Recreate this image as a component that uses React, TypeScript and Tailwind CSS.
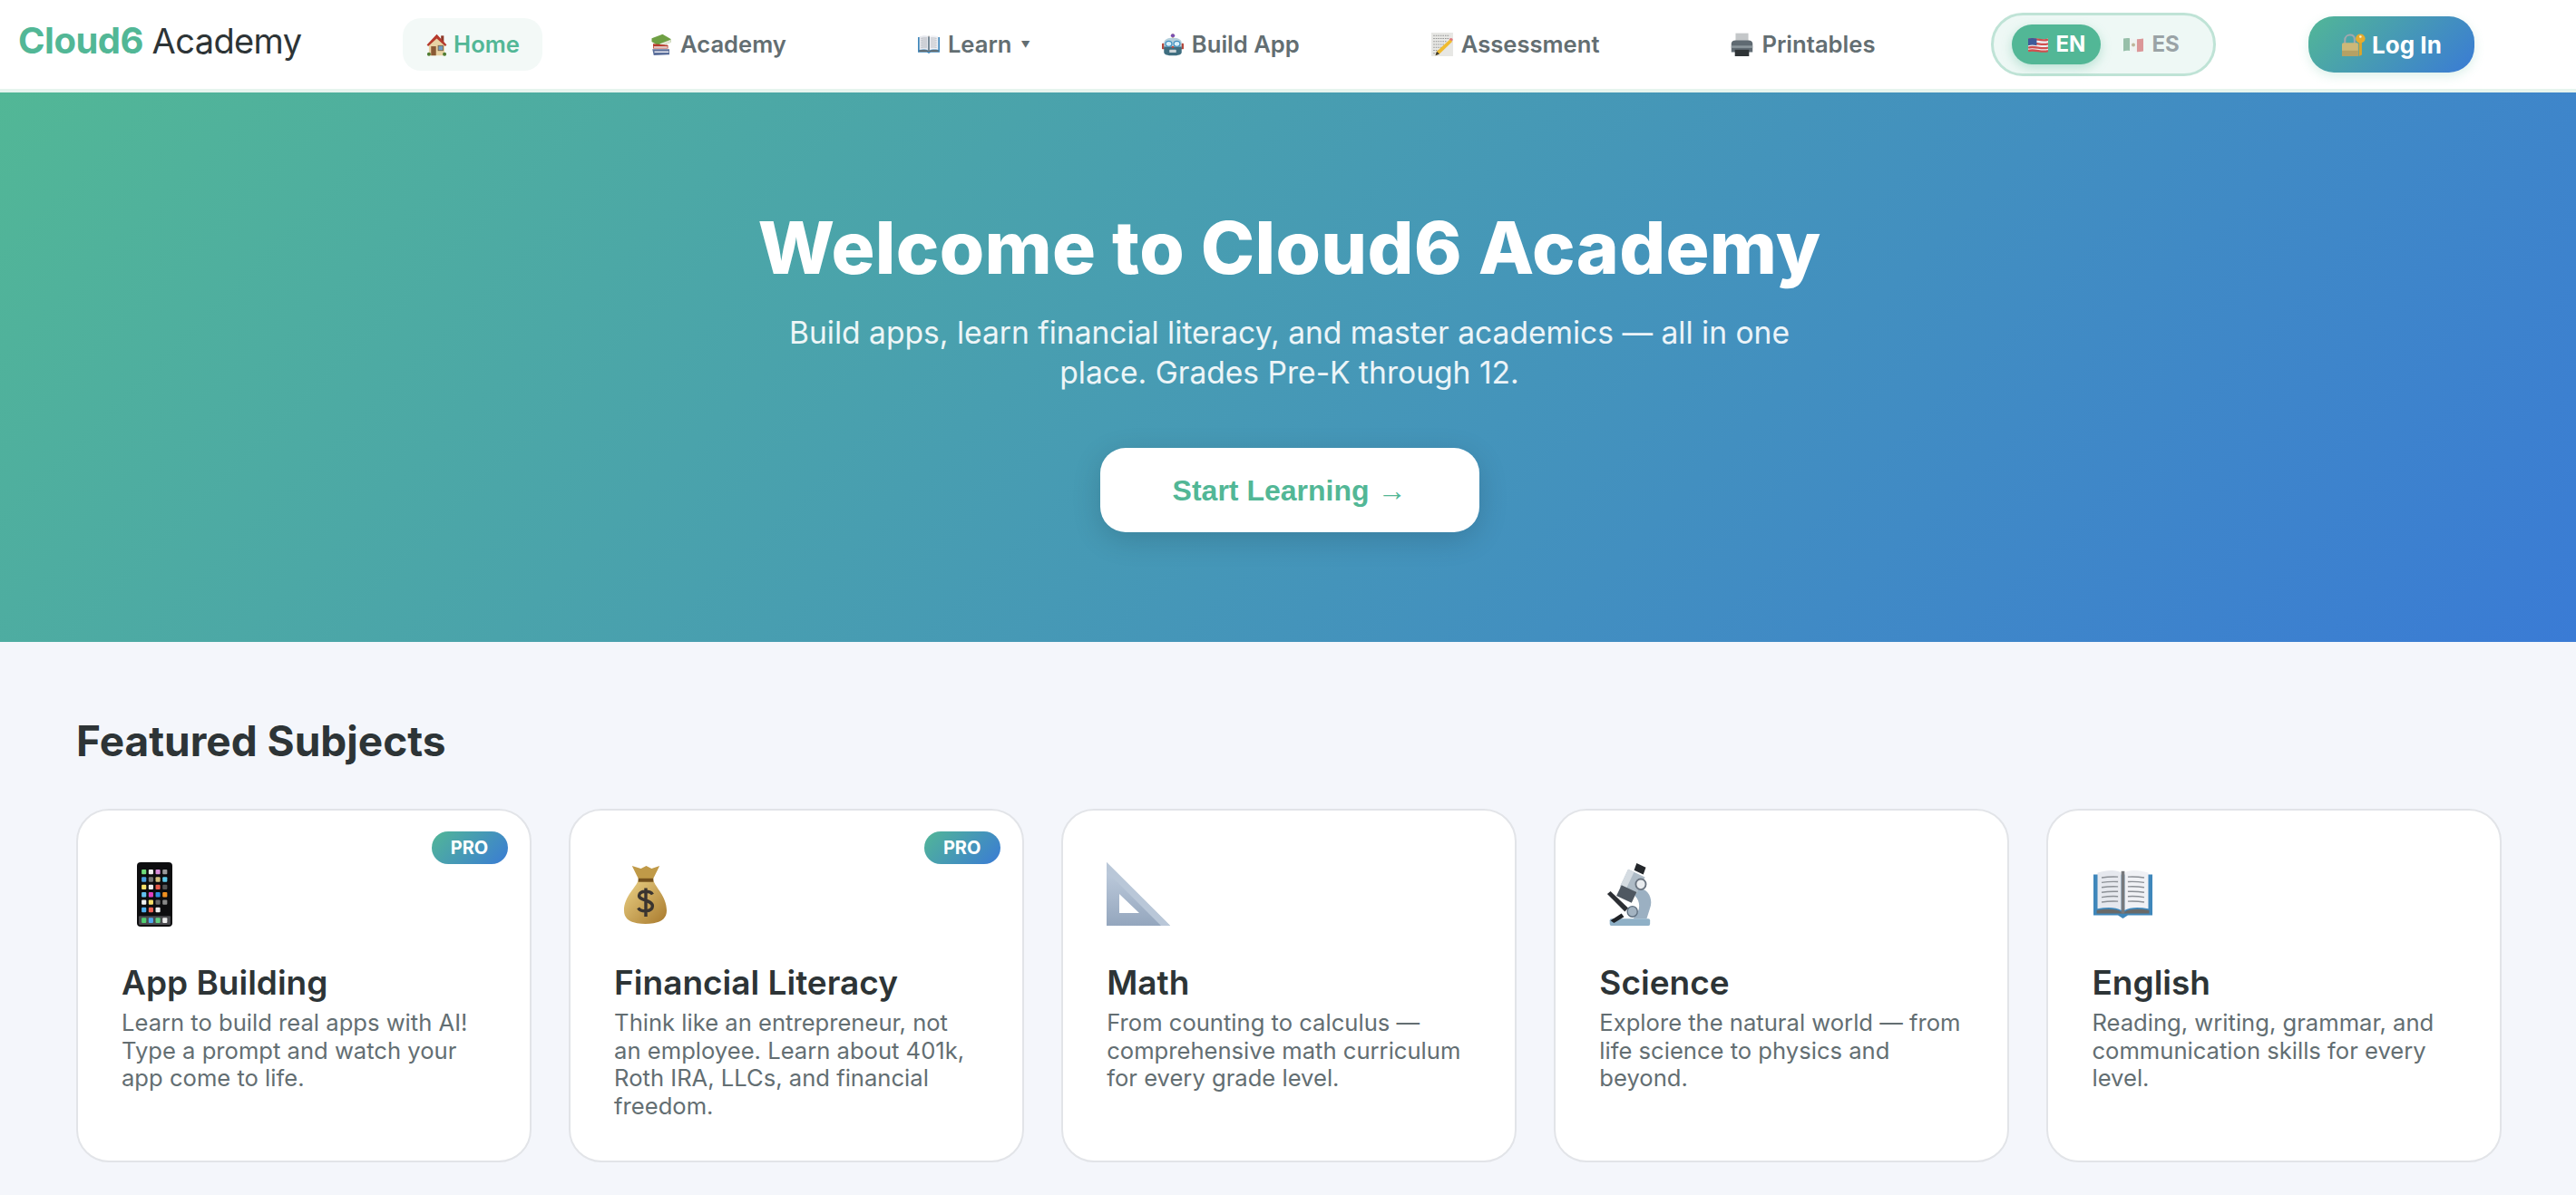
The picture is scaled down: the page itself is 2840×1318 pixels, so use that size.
import React from "react";

const House = () => (
  <svg viewBox="0 0 32 32" className="w-[25px] h-[25px] shrink-0" preserveAspectRatio="none">
    <rect x="22" y="3" width="4" height="9" fill="#8f3a2a" />
    <path d="M5 15 16 5l11 10v16H5z" fill="#e8d3a4" />
    <path d="M2 16 16 1l14 15-2 2L16 7 4 18z" fill="#b5392b" />
    <rect x="8" y="18" width="7" height="13" fill="#8a5a34" />
    <rect x="18" y="17" width="7" height="7" fill="#6d9cc0" stroke="#7b5a3a" />
    <circle cx="5" cy="29" r="2.6" fill="#4f7d33" /><circle cx="27" cy="29" r="2.6" fill="#4f7d33" />
  </svg>
);
const Books = () => (
  <svg viewBox="0 0 32 32" className="w-[24px] h-[24px] shrink-0" preserveAspectRatio="none">
    <path d="M2 7 18 1l12 7v5L14 19 2 12z" fill="#6fa044" />
    <path d="M14 15 30 9v4L14 19z" fill="#e6e6d8" />
    <path d="M4 15 26 17v5L4 22z" fill="#b83a2c" />
    <rect x="5" y="19" width="20" height="2" fill="#eee" />
    <path d="M3 23 28 23v8L5 32z" fill="#5a6e9a" />
    <rect x="6" y="26" width="21" height="2" fill="#e8e8f0" />
  </svg>
);
const OpenBook = ({ className }: { className: string }) => (
  <svg viewBox="0 0 36 30" className={className} preserveAspectRatio="none">
    <path d="M0 3h36v25H21l-3 2-3-2H0z" fill="#3f87bb" />
    <path d="M2 25c6-1 12-1 15 1h2c3-2 9-2 15-1v2H2z" fill="#6a6a68" />
    <path d="M2.500 2c6-2 12-2 14.500 0v23c-3-2-9-2-14.500-1z" fill="#e6e8ee" />
    <path d="M33.500 2c-6-2-12-2-14.500 0v23c3-2 9-2 14.500-1z" fill="#f0f1f5" />
    <rect x="17" y="1" width="2" height="26" fill="#77797c" />
    <g stroke="#8c9096" strokeWidth=".8" fill="none">
      <path d="M5 5c3-.5 6-.7 10-.5M5 8c3-.5 6-.7 10-.5M5 11c3-.5 6-.7 10-.5M5 14c3-.5 6-.7 10-.5M5 17c3-.5 6-.7 10-.5M5 20c3-.5 6-.7 10-.5" />
      <path d="M31 5c-3-.5-6-.7-10-.5M31 8c-3-.5-6-.7-10-.5M31 11c-3-.5-6-.7-10-.5M31 14c-3-.5-6-.7-10-.5M31 17c-3-.5-6-.7-10-.5M31 20c-3-.5-6-.7-10-.5" />
    </g>
  </svg>
);
const Robot = () => (
  <svg viewBox="0 0 32 40" className="w-[24px] h-[26px] shrink-0" preserveAspectRatio="none">
    <rect x="15" y="2" width="2" height="9" fill="#c9a24a" />
    <circle cx="16" cy="5" r="3" fill="#7b4fb0" />
    <rect x="0" y="18" width="4" height="10" rx="1" fill="#b5483c" /><rect x="28" y="18" width="4" height="10" rx="1" fill="#b5483c" />
    <path d="M3 18c0-6 5-9 13-9s13 3 13 9v8H3z" fill="#b4d0dc" />
    <path d="M3 24h26v9c0 4-5 6-13 6S3 37 3 33z" fill="#3f6e80" />
    <circle cx="10" cy="19" r="4.600" fill="#d8f0fa" stroke="#3f8fc0" strokeWidth="1.600" />
    <circle cx="22" cy="19" r="4.600" fill="#d8f0fa" stroke="#3f8fc0" strokeWidth="1.600" />
    <rect x="14.500" y="23" width="3" height="3" fill="#c2473b" />
    <rect x="11" y="29" width="10" height="5" rx="1" fill="#ccd4d8" />
  </svg>
);
const Memo = () => (
  <svg viewBox="0 0 32 40" className="w-[24px] h-[26px] shrink-0" preserveAspectRatio="none">
    <rect x="0" y="0" width="32" height="40" fill="#e7e7e4" />
    <g stroke="#8a8a8a" strokeWidth="1.300" strokeDasharray="2 1.400">
      <path d="M3 5h24M3 10h24M3 15h20M3 20h16M3 25h12M3 30h10M3 35h6" />
    </g>
    <circle cx="29" cy="12" r="2.600" fill="#e07a80" />
    <path d="M27 12l4 3L12 36l-6 3 2-7z" fill="#f0bb2f" />
    <path d="M6 39l2-7 4 4z" fill="#3a3a3a" />
  </svg>
);
const Printer = () => (
  <svg viewBox="0 0 32 40" className="w-[25px] h-[26px] shrink-0" preserveAspectRatio="none">
    <rect x="7" y="1" width="18" height="16" fill="#c4c7c9" />
    <path d="M1 19c0-4 2-6 6-6h18c4 0 6 2 6 6v14H1z" fill="#5f6a72" />
    <rect x="1" y="22" width="30" height="4" fill="#8b969c" />
    <rect x="6" y="29" width="20" height="11" fill="#2f3437" />
  </svg>
);
const USFlag = () => (
  <svg viewBox="0 0 28 22" className="w-[22px] h-[17px] shrink-0" preserveAspectRatio="none">
    <path d="M0 2c9-3 19 3 28 0v18c-9 3-19-3-28 0z" fill="#eef0f4" />
    <g fill="none" stroke="#d0504f" strokeWidth="3">
      <path d="M0 3.500c9-3 19 3 28 0M0 9.500c9-3 19 3 28 0M0 15c9-3 19 3 28 0" />
      <path d="M0 19.500c9-3 19 3 28 0" />
    </g>
    <path d="M0 2c4-1.300 8-1 12 0v10c-4-1-8-1.300-12 0z" fill="#3f5a9a" />
  </svg>
);
const MXFlag = () => (
  <svg viewBox="0 0 28 22" className="w-[22px] h-[17px] shrink-0 opacity-60" preserveAspectRatio="none">
    <path d="M0 2c3-1 6-1 9-.500v18c-3-.500-6-.500-9 .500z" fill="#5e9a78" />
    <path d="M9 1.500c3 .500 6 1.500 10 1.500v18c-4 0-7-1-10-1.500z" fill="#f1f1f1" />
    <path d="M19 3c3 0 6-.200 9-1v18c-3 .800-6 1-9 1z" fill="#d0575c" />
    <circle cx="14" cy="11" r="2.500" fill="#a08a60" />
  </svg>
);
const LockKey = () => (
  <svg viewBox="0 0 32 32" className="w-[26px] h-[25px] shrink-0" preserveAspectRatio="none">
    <path d="M4 14V9c0-4 3-7 7-7s6 2 6 6v6" fill="none" stroke="#a3a8ad" strokeWidth="2.500" />
    <rect x="0" y="13" width="22" height="19" rx="2" fill="#cdb878" />
    <rect x="0" y="24" width="22" height="8" fill="#b5a164" />
    <path d="M23 10v22l4-2V10z" fill="#dba52b" />
    <circle cx="25" cy="7" r="6.500" fill="#e6ab2e" />
    <circle cx="25" cy="4.500" r="1.600" fill="#fff3c9" />
  </svg>
);
const Phone = () => (
  <svg viewBox="0 0 38 72" className="w-[39px] h-[71px]" preserveAspectRatio="none">
    <rect x="0" y="0" width="38" height="72" rx="4" fill="#0d0d0f" />
    {["#6fdc7a,#eee,#d78bd8,#9a9a9a","#4aa0e0,#777,#d4c080,#5cc8e8","#f7e06a,#eee,#e85a4a,#555","#62c0f0,#e040c0,#3090e0,#f09020","#f0f0f0,#f7e06a,#666,#888","#50b0f0,#f06050,#eee,#0d0d0f"].map((row, r) =>
      row.split(",").map((c, i) => <rect key={r + "-" + i} x={5 + i * 7.5} y={8 + r * 8.5} width="5" height="5.5" rx="1" fill={c} />)
    )}
    <rect x="2" y="60" width="34" height="10" rx="1" fill="#4a4a4e" />
    {["#50d070","#50a8f0","#60d080","#eee"].map((c, i) => <rect key={c + i} x={5 + i * 7.5} y="62" width="5" height="6" rx="1" fill={c} />)}
  </svg>
);
const MoneyBag = () => (
  <svg viewBox="0 0 50 66" className="w-[49px] h-[65px]" preserveAspectRatio="none">
    <defs><linearGradient id="bag" x1="0" y1="0" x2="1" y2="1"><stop offset="0" stopColor="#ecd388" /><stop offset="1" stopColor="#a8792c" /></linearGradient></defs>
    <path d="M10 1l10 3 6-3 6 3 9-3-8 16H18z" fill="#c09a48" />
    <path d="M17 17h17c2 8 15 18 15 34 0 11-10 15-24 15S1 62 1 51c0-16 14-26 16-34z" fill="url(#bag)" />
    <rect x="17" y="15" width="17" height="4" fill="#74511d" />
    <path d="M33 33c-2-4-14-5-15 1s15 5 15 12-13 7-16 2M25.500 26v32" fill="none" stroke="#3a3430" strokeWidth="3.500" />
  </svg>
);
const SetSquare = () => (
  <svg viewBox="0 0 70 70" className="w-[70px] h-[70px]" preserveAspectRatio="none">
    <defs><linearGradient id="sq" x1="0" y1="0" x2="0" y2="1"><stop offset="0" stopColor="#c3d0e0" /><stop offset="1" stopColor="#94a6bd" /></linearGradient></defs>
    <path fillRule="evenodd" d="M0 0 70 70H0zM14 35v21h22z" fill="url(#sq)" />
    <path d="M0 0 70 70H60L0 10z" fill="#b9c7d8" />
  </svg>
);
const Microscope = () => (
  <svg viewBox="0 0 54 72" className="w-[50px] h-[70px]" preserveAspectRatio="none">
    <path d="M36 30C50 28 56 42 52 52L48 64H32C40 56 42 46 34 38Z" fill="#9bb0c2" />
    <path d="M26 8 46 17 36 36 16 28z" fill="#aebbc6" />
    <path d="M26 8 33 11 23 31 16 28z" fill="#d5dce2" />
    <path d="M18 26 36 34 30 46 12 38z" fill="#4f5862" />
    <path d="M36 1 47 6 44 14 33 9z" fill="#24272b" />
    <circle cx="41" cy="25" r="6" fill="#e9ecef" stroke="#6a7480" strokeWidth="2" />
    <path d="M1 36 5 33 26 52 22 56z" fill="#2b2e33" />
    <rect x="4" y="64" width="48" height="8" rx="2" fill="#8fb0c6" />
    <path d="M5 66 18 58 21 62 9 69z" fill="#1f2226" />
    <circle cx="31" cy="56" r="6" fill="#a3b3c1" stroke="#5f7080" strokeWidth="1.500" />
  </svg>
);

const links = [
  { icon: <Books />, label: "Academy" },
  { icon: <OpenBook className="w-[24px] h-[20px] shrink-0" />, label: "Learn", caret: true },
  { icon: <Robot />, label: "Build App" },
  { icon: <Memo />, label: "Assessment" },
  { icon: <Printer />, label: "Printables" },
];

const cards = [
  { icon: <Phone />, offset: "ml-[17px]", title: "App Building", pro: true, desc: "Learn to build real apps with AI! Type a prompt and watch your app come to life." },
  { icon: <MoneyBag />, offset: "ml-[10px]", title: "Financial Literacy", pro: true, desc: "Think like an entrepreneur, not an employee. Learn about 401k, Roth IRA, LLCs, and financial freedom." },
  { icon: <SetSquare />, offset: "ml-0", title: "Math", pro: false, desc: "From counting to calculus — comprehensive math curriculum for every grade level." },
  { icon: <Microscope />, offset: "ml-[8px]", title: "Science", pro: false, desc: "Explore the natural world — from life science to physics and beyond." },
  { icon: <OpenBook className="w-[65px] h-[54px]" />, offset: "ml-[2px]", title: "English", pro: false, desc: "Reading, writing, grammar, and communication skills for every level." },
];

export default function App() {
  return (
    <div className="h-[1318px] overflow-hidden bg-[#f4f6fb] font-['Inter',sans-serif] text-[#2d3436]">
      <header className="h-[102px] bg-white border-b-[4px] border-[#e6f4ee] flex items-center pl-[20px]">
        <div className="w-[424px] shrink-0 whitespace-nowrap leading-[50px]">
          <span className="text-[40px] tracking-[-0.5px] font-bold text-[#52b796]">Cloud6</span>{" "}
          <span className="ml-[5px] text-[38px] tracking-[-0.6px] font-normal">Academy</span>
        </div>
        <nav className="flex items-center gap-[89px]">
          <div className="mr-[2px] h-[58px] w-[154px] rounded-[20px] bg-[#f3f9f7] flex items-center justify-center gap-[6px] text-[25.6px] font-semibold text-[#52b796]">
            <House />Home
          </div>
          {links.map((l) => (
            <div key={l.label} className="h-[58px] px-[28px] flex items-center gap-[9px] text-[25.6px] font-semibold text-[#636e72] whitespace-nowrap">
              {l.icon}{l.label}{l.caret && <span className="text-[10px] ml-[1px]">▼</span>}
            </div>
          ))}
        </nav>
        <div className="ml-[100px] w-[248px] h-[70px] shrink-0 rounded-full border-[3px] border-[#bfe3d6] bg-[#eef8f5] flex items-center pl-[20px] gap-[25px] text-[24px] font-bold">
          <div className="w-[98px] h-[44px] rounded-[22px] bg-[#52b796] text-white flex items-center justify-center gap-[9px] shadow-[0_4px_12px_rgba(82,183,150,0.35)]"><USFlag />EN</div>
          <div className="flex items-center gap-[9px] text-[#9aa3a6]"><MXFlag />ES</div>
        </div>
        <div className="ml-[102px] w-[183px] h-[62px] shrink-0 rounded-[28px] bg-[linear-gradient(135deg,#52b796,#3a7bd5)] text-white text-[26px] font-bold flex items-center justify-center gap-[7px] shadow-[0_4px_12px_rgba(82,183,150,0.2)]">
          <LockKey />Log In
        </div>
      </header>

      <section className="h-[606px] bg-[linear-gradient(135deg,#52b796,#3a7bd5)] flex flex-col items-center text-center pt-[118px] pl-[3px]">
        <h1 className="text-[80px] leading-[106px] font-extrabold text-white tracking-[0.3px] whitespace-nowrap">Welcome to Cloud6 Academy</h1>
        <p className="mt-[19px] w-[1200px] text-[33.6px] leading-[44px] text-white/90">Build apps, learn financial literacy, and master academics — all in one place. Grades Pre-K through 12.</p>
        <button className="mt-[61px] w-[418px] h-[93px] rounded-[28px] bg-white text-[#52b796] text-[32px] font-bold font-['Liberation_Sans',sans-serif] shadow-[0_8px_32px_rgba(0,0,0,0.15)]">Start Learning →</button>
      </section>

      <main className="pl-[84px] pr-[82px] pt-[80px]">
        <h2 className="text-[46px] leading-[58px] font-bold text-[#2d3436]">Featured Subjects</h2>
        <div className="mt-[46px] grid grid-cols-5 gap-[41.6px]">
          {cards.map((c) => (
            <div key={c.title} className="relative h-[390px] rounded-[36px] border-2 border-[#e2e4e8] bg-white px-[48px] pt-[56px]">
              {c.pro && <span className="absolute top-[23px] right-[24px] w-[84px] h-[36px] rounded-full bg-[linear-gradient(135deg,#52b796,#3a7bd5)] text-white text-[20px] font-bold flex items-center justify-center">PRO</span>}
              <div className={"h-[72px] flex items-center " + c.offset}>{c.icon}</div>
              <h3 className="mt-[37px] text-[37px] leading-[50px] font-semibold text-[#2d3436] whitespace-nowrap">{c.title}</h3>
              <p className="mt-[4px] text-[25.6px] leading-[30.7px] text-[#636e72]">{c.desc}</p>
            </div>
          ))}
        </div>
      </main>
    </div>
  );
}
